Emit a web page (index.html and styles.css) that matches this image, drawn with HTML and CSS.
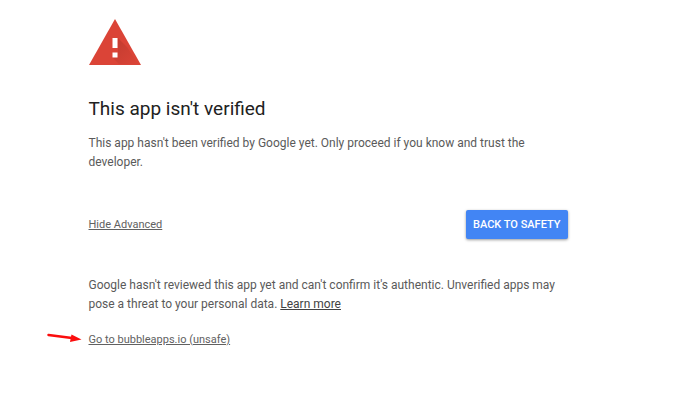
FILE: index.html
```html
<!DOCTYPE html>
<html lang="en">
<head>
<meta charset="utf-8">
<title>This app isn't verified</title>
<link rel="stylesheet" href="styles.css">
</head>
<body>
<main class="page">
  <svg class="warning" viewBox="0 0 52 46" role="img" aria-label="Warning">
    <defs>
      <linearGradient id="shade" x1="0" y1="0" x2="1" y2="1">
        <stop offset="0" stop-color="#8e2a20" stop-opacity="0.35"/>
        <stop offset="1" stop-color="#8e2a20" stop-opacity="0"/>
      </linearGradient>
    </defs>
    <path fill="#db4437" d="M26 0 52 46H0z"/>
    <path fill="url(#shade)" d="M29 19 38 28 49 45H30L23 38 29 38z"/>
    <path fill="#fff" d="M23.500 19h5v10h-5zM23.500 33.500h5v5h-5z"/>
  </svg>
  <h1 class="title">This app isn't verified</h1>
  <p class="text">This app hasn't been verified by Google yet. Only proceed if you know and trust the developer.</p>
  <div class="actions">
    <a class="link" href="#details">Hide Advanced</a>
    <button class="safety" type="button">BACK TO SAFETY</button>
  </div>
  <section id="details">
    <p class="text">Google hasn't reviewed this app yet and can't confirm it's authentic. Unverified apps may pose a threat to your personal data. <a class="more" href="#learn">Learn more</a></p>
    <p class="proceed">
      <svg class="arrow" viewBox="0 0 36 12" aria-hidden="true">
        <path d="M1.500 2 25 5" fill="none" stroke="#fb0d0d" stroke-width="2.500" stroke-linecap="round"/>
        <path d="M24.500 1.500 34.500 6.500 23 9z" fill="#fb0d0d"/>
      </svg>
      <a class="link" href="#proceed">Go to bubbleapps.io (unsafe)</a>
    </p>
  </section>
</main>
</body>
</html>
```
FILE: styles.css
```css
body {
  margin: 0;
  background: #fff;
  color: #5a5a5a;
  font-family: Roboto, sans-serif;
}

.page {
  max-width: 479px;
  margin: 0 auto;
  padding: 19px 34px 40px 0;
  box-sizing: content-box;
}

.warning {
  display: block;
  width: 52px;
  height: 46px;
}

.title {
  margin: 30px 0 11px;
  color: #212121;
  font-size: 19px;
  font-weight: 400;
  line-height: 28px;
}

.text {
  margin: 0;
  font-size: 12px;
  line-height: 19px;
}

.actions {
  display: flex;
  align-items: center;
  justify-content: space-between;
  margin: 38px 0 37px;
}

.link {
  color: #616161;
  font-size: 11px;
  line-height: 16px;
}

.more {
  color: #424242;
}

.safety {
  height: 29px;
  padding: 0 7px;
  border: 0;
  border-radius: 2px;
  background: #4285f4;
  box-shadow: 0 1px 3px rgba(0, 0, 0, 0.4);
  color: #fff;
  font: 500 11px/29px Roboto, sans-serif;
}

.proceed {
  position: relative;
  display: flex;
  margin: 18px 0 0;
}

.arrow {
  position: absolute;
  top: 1px;
  left: -42px;
  width: 36px;
  height: 12px;
}
```
